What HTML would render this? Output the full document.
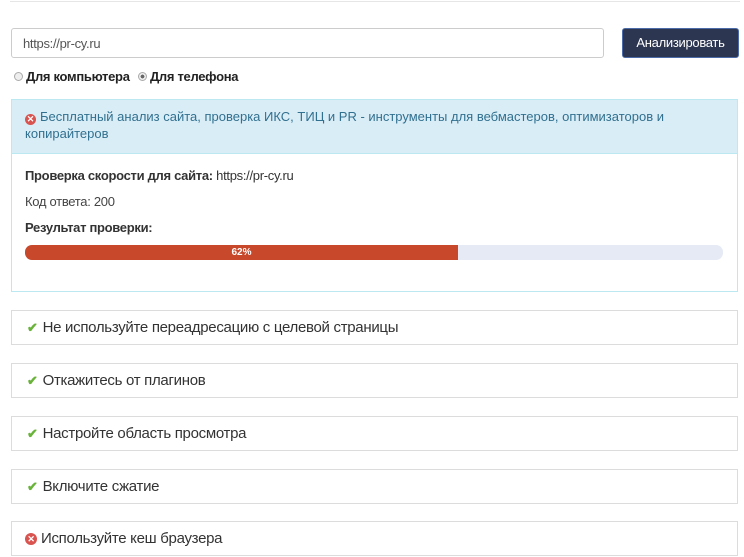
<!DOCTYPE html>
<html><head><meta charset="utf-8"><style>
*{box-sizing:border-box;margin:0;padding:0}
body{width:744px;height:557px;overflow:hidden;background:#fff;font-family:"Liberation Sans",sans-serif;color:#333;position:relative}
.abs{position:absolute}
.n{letter-spacing:-0.3px}
.panel{position:absolute;left:11px;width:727px;border:1px solid #dcdcdc;background:#fff;font-size:15px;color:#333;padding-left:15px;display:flex;align-items:center}
.ck{color:#6ab33a;font-size:13px;margin-right:5px;font-weight:bold}
.x{display:inline-block;width:11px;height:11px;border-radius:50%;background:#d9534f;color:#fff;font-size:9px;line-height:11px;text-align:center;font-weight:bold;margin-right:4px;vertical-align:-1px}
</style></head><body>
<div class="abs" style="left:10px;top:0;width:730px;height:2px;border-bottom:1px solid #e6e6e6"></div>
<div class="abs n" style="left:11px;top:28px;width:593px;height:30px;border:1px solid #ccc;border-radius:3px;font-size:13px;color:#555;padding:7px 0 0 11px">https://pr-cy.ru</div>
<div class="abs n" style="left:622px;top:28px;width:117px;height:30px;background:#2c3650;border:1px solid #4a6aa8;border-radius:3px;color:#fff;font-size:13px;text-align:center;line-height:28px">Анализировать</div>
<div class="abs n" style="left:14px;top:69px;font-size:13px;font-weight:bold;color:#222">
<span style="display:inline-block;width:9px;height:9px;border:1px solid #aaa;border-radius:50%;background:#eee;margin-right:3px"></span>Для компьютера
<span style="display:inline-block;width:9px;height:9px;border:1px solid #aaa;border-radius:50%;background:radial-gradient(#666 35%,#eee 40%);margin:0 3px 0 5px"></span>Для телефона</div>
<div class="abs" style="left:11px;top:99px;width:727px;height:55px;background:#d9edf7;border:1px solid #bce8f1;color:#31708f;font-size:13px;line-height:17px;padding:8px 70px 8px 13px"><span class="x">✕</span>Бесплатный анализ сайта, проверка ИКС, ТИЦ и PR - инструменты для вебмастеров, оптимизаторов и копирайтеров</div>
<div class="abs" style="left:11px;top:153px;width:727px;height:139px;border:1px solid #bce8f1;border-top:none"></div>
<div class="abs n" style="left:25px;top:168px;font-size:13px;color:#333"><b>Проверка скорости для сайта:</b> https://pr-cy.ru</div>
<div class="abs n" style="left:25px;top:194px;font-size:13px;color:#444">Код ответа: 200</div>
<div class="abs n" style="left:25px;top:220px;font-size:13px;font-weight:bold;color:#333">Результат проверки:</div>
<div class="abs" style="left:25px;top:245px;width:698px;height:15px;background:#e6eaf4;border-radius:7px;overflow:hidden"><div style="width:433px;height:15px;background:#c7482b;color:#fff;font-size:10px;font-weight:bold;text-align:center;line-height:15px">62%</div></div>
<div class="panel n" style="top:310px;height:35px"><span class="ck">✔</span>Не используйте переадресацию с целевой страницы</div>
<div class="panel n" style="top:363px;height:35px"><span class="ck">✔</span>Откажитесь от плагинов</div>
<div class="panel n" style="top:416px;height:35px"><span class="ck">✔</span>Настройте область просмотра</div>
<div class="panel n" style="top:469px;height:35px"><span class="ck">✔</span>Включите сжатие</div>
<div class="panel n" style="top:521px;height:35px;padding-left:13px"><span class="x" style="width:12px;height:12px;line-height:12px">✕</span>Используйте кеш браузера</div>
</body></html>
